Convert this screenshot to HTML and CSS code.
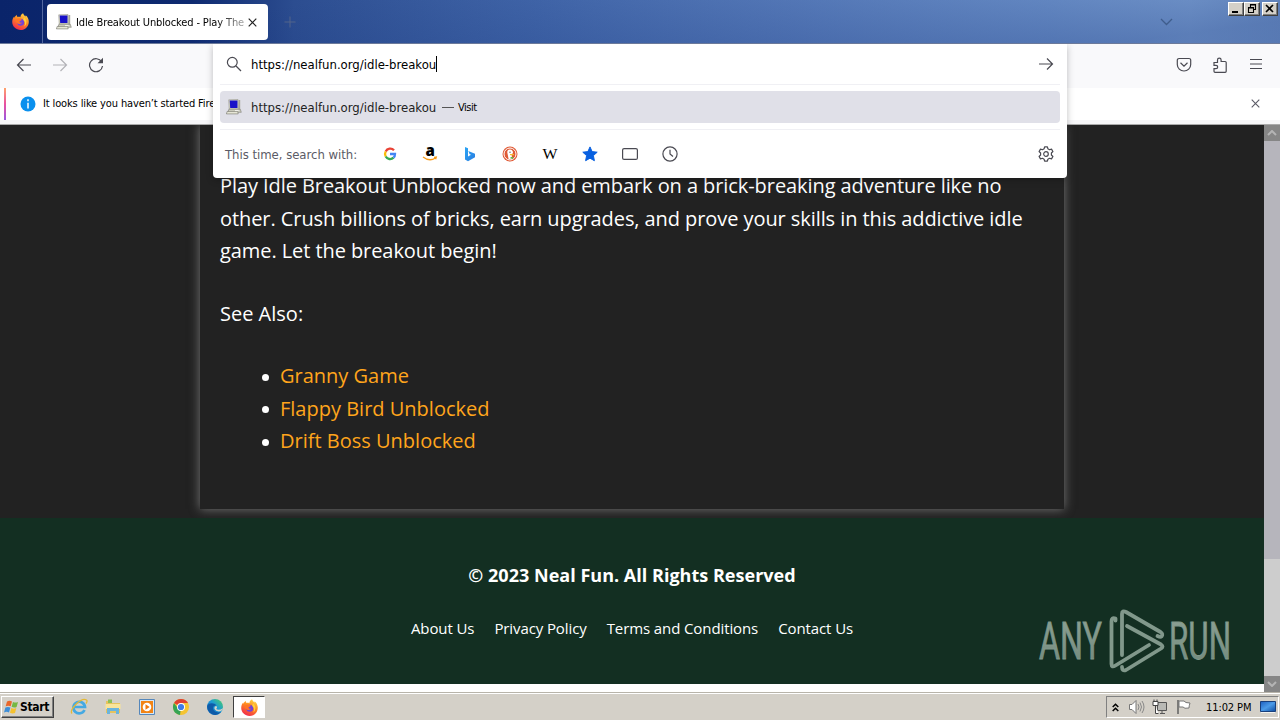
FILE: index.html
```html
<!DOCTYPE html>
<html lang="en">
<head>
<meta charset="utf-8">
<title>Idle Breakout Unblocked</title>
<link rel="stylesheet" href="styles.css">
</head>
<body>
<svg class="defs" width="0" height="0">
  <defs>
    <linearGradient id="fox" x1="0.8" y1="0" x2="0.3" y2="1"><stop offset="0" stop-color="#ffe14a"/><stop offset=".45" stop-color="#ff8a20"/><stop offset="1" stop-color="#f0264f"/></linearGradient>
    <linearGradient id="bing" x1="0" y1="0" x2="1" y2="1"><stop offset="0" stop-color="#2aa5f5"/><stop offset="1" stop-color="#2a7de0"/></linearGradient>
    <linearGradient id="edge" x1="0" y1="1" x2="1" y2="0"><stop offset="0" stop-color="#0b5db5"/><stop offset=".55" stop-color="#1c9ad6"/><stop offset="1" stop-color="#4fd35c"/></linearGradient>
    <linearGradient id="desk" x1="0" y1="0" x2="1" y2="1"><stop offset="0" stop-color="#1c5fc0"/><stop offset=".5" stop-color="#4b9be8"/><stop offset="1" stop-color="#0c4aa0"/></linearGradient>
    <linearGradient id="mark" x1="0" y1="0" x2="0" y2="1"><stop offset="0" stop-color="#8fa397"/><stop offset="1" stop-color="#6f877a"/></linearGradient>
    <symbol id="firefox" viewBox="0 0 16 16">
      <path fill="url(#fox)" d="M10.4.2c.3 1.1 1.3 2 2.3 3 .2-.5.2-.8.1-1.2 2 1.400 3.100 4 3 6.400C15.700 12.700 12.300 16 8.100 16 3.700 16 .2 12.600.2 8.500c0-2.200.8-4 1.900-5.100v1.300C2.800 3.200 4 2.100 4.500 1.700c-.1.900.2 1.500.9 2 1.100-.2 1.900 0 2.500.3C7.900 2.300 9 .9 10.400.2z"/>
      <circle cx="8.200" cy="8.600" r="3.300" fill="#7443d8"/>
      <path fill="#ff7426" d="M3 7.500c1-1.800 2.300-2.600 4.500-2.300 1.200.2 1.700.8 1.500 1.300-.3.700-1.700.6-1.900 1.500-.1.900 1.200 1.600 2.700 1-1 1.600-3.600 2-5.400.2z"/>
      <path fill="#ffd33d" d="M11.300 4.300c1.800 1.300 2.500 3 2.200 5.100-.3 1.600-1.200 2.800-2 3.300 1.200-2.300 1.200-4.500-.9-6.200z"/>
    </symbol>
    <symbol id="computer" viewBox="0 0 16 16">
      <path fill="#d8d8c4" stroke="#8c8c80" stroke-width=".5" d="M2.700.8 12 .5l.5 9.300-9.300.2z"/>
      <path fill="#1710c8" d="M3.700 1.500h7.800v7.600H4.200z"/>
      <path fill="#a5a598" d="M12.500 1h1.700v10h-1.700z"/>
      <path fill="#cfcfc0" stroke="#6a6a60" stroke-width=".5" d="M2.800 10.300h11.500l1 3H2z"/>
      <path fill="#e6e6d6" stroke="#5d5d54" stroke-width=".5" d="M1.200 12.400h10.500l.5 2.500H.4z"/>
      <path stroke="#fff" stroke-width=".8" d="M9 11.600h3.600"/>
    </symbol>
  </defs>
</svg>
<div class="screen">
  <header class="tabs">
    <div class="home-tab"><svg width="17" height="17"><use href="#firefox"/></svg></div>
    <div class="tab">
      <svg width="16" height="16"><use href="#computer"/></svg>
      <span class="tab-title">Idle Breakout Unblocked - Play The</span>
      <svg class="tab-close" width="9" height="9" viewBox="0 0 9 9"><path d="M.7.7l7.600 7.600M8.300.7.700 8.300" stroke="#222" stroke-width="1.200"/></svg>
    </div>
    <svg class="new-tab" width="12" height="12" viewBox="0 0 12 12"><path d="M6 .5v11M.5 6h11" stroke="#53658a"/></svg>
    <svg class="tab-list" width="13" height="8" viewBox="0 0 13 8"><path d="M1 1l5.500 5.500L12 1" fill="none" stroke="#3f5d8c" stroke-width="1.300"/></svg>
    <div class="win-buttons">
      <span class="wb"><svg width="13" height="10" viewBox="0 0 13 10"><path d="M3 9h6" stroke="#000" stroke-width="2"/></svg></span>
      <span class="wb"><svg width="13" height="11" viewBox="0 0 13 11"><path d="M5.500 4V1.500h5v5H8.500M5 2h6M3.500 4.500h5v5h-5zM3 5h6" fill="none" stroke="#000" stroke-width="1.100"/></svg></span>
      <span class="wb close"><svg width="13" height="11" viewBox="0 0 13 11"><path d="M3 2l7 7M10 2l-7 7" stroke="#000" stroke-width="1.600"/></svg></span>
    </div>
  </header>
  <nav class="toolbar">
    <svg width="16" height="16" viewBox="0 0 16 16"><path d="M15 8H1.500M7.500 2l-6 6 6 6" class="line"/></svg>
    <svg class="dim" width="16" height="16" viewBox="0 0 16 16"><path d="M1 8h13.500M8.500 2l6 6-6 6" class="line"/></svg>
    <svg width="16" height="16" viewBox="0 0 16 16"><path d="M13.700 5A6.500 6.500 0 1 0 14.500 9" class="line"/><path fill="#4a4a52" d="M15 .8v5.500H9.500z"/></svg>
    <div class="tools">
      <svg width="16" height="16" viewBox="0 0 16 16"><path d="M3 1.500h10a1.700 1.700 0 0 1 1.700 1.700V7.500a6.700 6.500 0 0 1-13.400 0V3.200A1.700 1.700 0 0 1 3 1.500zM4.500 5.800 8 9.100l3.500-3.300" class="line"/></svg>
      <svg width="16" height="16" viewBox="0 0 16 16"><path d="M2 5.500h3.500V3a1.800 1.800 0 0 1 3.600 0v1.500h4.100a1 1 0 0 1 1 1v8.800a1 1 0 0 1-1 1H3a1 1 0 0 1-1-1v-2.600h2a1.600 1.600 0 0 0 0-3.400H2z" class="line"/></svg>
      <svg width="16" height="16" viewBox="0 0 16 16"><path d="M2 2.500h12M2 7h12M2 11.500h12" class="line"/></svg>
    </div>
  </nav>
  <div class="notice">
    <i class="stripe"></i>
    <svg width="16" height="16" viewBox="0 0 16 16"><circle cx="8" cy="8" r="7.500" fill="#0a90ee"/><path d="M8 3.300v1.900M8 6.700v5.700" stroke="#fff" stroke-width="1.500"/></svg>
    <span class="notice-text">It looks like you haven’t started Fire</span>
    <svg class="notice-close" width="9" height="9" viewBox="0 0 9 9"><path d="M.7.7l7.600 7.600M8.300.7.700 8.300" stroke="#5b5b66" stroke-width="1.100"/></svg>
  </div>
  <div class="viewport">
    <div class="page">
      <div class="stage">
        <article class="card">
          <p class="intro">Play Idle Breakout Unblocked now and embark on a brick-breaking adventure like no<br>other. Crush billions of bricks, earn upgrades, and prove your skills in this addictive idle<br>game. Let the breakout begin!</p>
          <p class="see">See Also:</p>
          <ul class="links">
            <li><a>Granny Game</a></li>
            <li><a>Flappy Bird Unblocked</a></li>
            <li><a>Drift Boss Unblocked</a></li>
          </ul>
        </article>
      </div>
      <footer class="footer">
        <p class="copyright">© 2023 Neal Fun. All Rights Reserved</p>
        <div class="footer-links"><a>About Us</a><a>Privacy Policy</a><a>Terms and Conditions</a><a>Contact Us</a></div>
        <svg class="watermark" width="200" height="74" viewBox="0 0 200 74">
          <g fill="url(#mark)" stroke="#81988b" stroke-width=".8" font-family="Roboto, sans-serif" font-size="51">
            <text x="4" y="54" textLength="63" lengthAdjust="spacingAndGlyphs">ANY</text>
            <text x="134" y="54" textLength="62" lengthAdjust="spacingAndGlyphs">RUN</text>
          </g>
          <g fill="none" stroke="#81988b" stroke-width="3.800" stroke-linejoin="round" stroke-linecap="round">
            <path d="M80.500 15.500v-2q-4-1.500-4 3V59q0 4 4 1.500L114 40"/>
            <path d="M87 50V9q0-4 4-2L125.500 27q3 2 1 4.500-1 1-4-.5"/>
            <path d="M92 21l34 18.500q3 2 0 4L91 65q-4 1.500-4-3"/>
          </g>
        </svg>
      </footer>
    </div>
    <div class="scrollbar">
      <span class="sb-btn"><svg width="10" height="6" viewBox="0 0 10 6"><path d="M1 5l4-4 4 4" fill="none" stroke="#b4b4b4" stroke-width="2"/></svg></span>
      <span class="thumb"></span>
      <span class="track"></span>
      <span class="sb-btn"><svg width="10" height="6" viewBox="0 0 10 6"><path d="M1 1l4 4 4-4" fill="none" stroke="#b4b4b4" stroke-width="2"/></svg></span>
    </div>
  </div>
  <div class="taskbar">
    <div class="start"><svg width="15" height="15" viewBox="0 0 15 15"><path fill="#e9672b" d="M3 1.500q2.500-1.300 5 0L6.700 6.300q-2.500-1.100-5 0z"/><path fill="#75b843" d="M9 2q2.500 1.200 5 0l-1.400 5q-2.500 1.100-5-.2z"/><path fill="#3d8ed8" d="M1.400 7.500q2.500-1.200 5 0L5 12.400q-2.500-1.100-5 0z"/><path fill="#f5c12e" d="M7.300 8q2.500 1.200 5 .1L11 13q-2.500 1-5-.2z"/></svg><b>Start</b></div>
    <div class="launch">
      <svg width="18" height="18" viewBox="0 0 18 18"><path d="M14.500 12A5.800 5.800 0 1 1 15 9H5" fill="none" stroke="#45a9e2" stroke-width="2.700"/><path d="M2 15.500C-1 12 11-1 16.500 2q1.300 1-.5 3.500" fill="none" stroke="#e4b936" stroke-width="1.300"/></svg>
      <svg width="18" height="18" viewBox="0 0 18 18"><path fill="#e7c35d" d="M2 3h5l1 2h8v10H2z"/><path fill="#8cbf55" d="M4 1.500h4V5H4z"/><path fill="#f9e49a" d="M1.500 6h15v5h-15z"/><path fill="#6bb4dc" d="M3 10h12v6h-3v-3H6v3H3z"/></svg>
      <svg width="18" height="18" viewBox="0 0 18 18"><path fill="#d7e8f6" stroke="#5587bb" d="M1.500 1.500h15v15h-15z"/><path fill="#f28415" d="M3 3h12v12H3z"/><circle cx="9" cy="9" r="4.300" fill="#fff"/><path fill="#ef790e" d="M7.500 6.300 11.700 9l-4.200 2.700z"/></svg>
      <svg width="18" height="18" viewBox="0 0 18 18"><circle cx="9" cy="9" r="8" fill="#f5c431"/><path fill="#df4133" d="M9 9 2 5.100A8 8 0 0 1 16 5H9z"/><path fill="#36a455" d="M9 9 8 17A8 8 0 0 1 2 5.100l4.500 6z"/><circle cx="9" cy="9" r="4" fill="#fff"/><circle cx="9" cy="9" r="3.100" fill="#3e7be8"/></svg>
      <svg width="18" height="18" viewBox="0 0 18 18"><circle cx="9" cy="9" r="8" fill="url(#edge)"/><path fill="#0f5ba8" d="M1.200 8C2 5 8 4 10.500 7.500 8 7 6 9 7.500 12q2 3.500 7.500 2-4 4.500-9 2Q1 13 1.200 8z"/><path fill="#d6d3ca" d="M10.500 8q1.200 2-.3 3 2.500 2 6.800-.8-.2 2.700-2.700 3.100-4.500.7-5.800-2.300Q8 8 10.500 8z"/></svg>
      <span class="active-app"><svg width="17" height="17"><use href="#firefox"/></svg></span>
    </div>
    <div class="tray">
      <svg width="7" height="9" viewBox="0 0 7 9"><path d="M.7 4l2.800-2.800L6.300 4M.7 8l2.800-2.800L6.300 8" fill="none" stroke="#000" stroke-width="1.500"/></svg>
      <svg class="t-vol" width="17" height="16" viewBox="0 0 17 16"><path d="M1.500 5.500H4l4-4v13l-4-4H1.500z" fill="#fff" stroke="#777"/><path d="M10 5q2 3 0 6M12 3.500q3 4.500 0 9M14 2q4 6 0 12" fill="none" stroke="#888"/></svg>
      <svg class="t-net" width="16" height="16" viewBox="0 0 16 16"><path d="M5.500 3.500h9v8h-9zM8 14.500h5M10 12v2" fill="#b9b9b5" stroke="#555"/><path d="M1 2.500h5v4H1zM2 .5v2M5 .5v2M3.500 6.500v8h3" fill="#fff" stroke="#444"/></svg>
      <svg class="t-flag" width="16" height="16" viewBox="0 0 16 16"><path d="M2 1v14" stroke="#666" stroke-width="1.600"/><path d="M3 2h5q1 2 6 2-1 3-1 5Q8 10 7 8H3z" fill="#fff" stroke="#777"/></svg>
      <span class="clock">11:02 PM</span>
      <svg width="16" height="14" viewBox="0 0 16 14"><path fill="url(#desk)" stroke="#183f7c" d="M.5 1.500h15v10H.5z"/><path d="M1 12.500h14" stroke="#f3f3ef"/></svg>
    </div>
  </div>
  <section class="urlbar">
    <div class="input-row">
      <svg width="16" height="16" viewBox="0 0 16 16"><circle cx="6.300" cy="6.300" r="4.900" class="line"/><path d="M10 10l5 5" class="line"/></svg>
      <span class="url">https://nealfun.org/idle-breakou</span><i class="caret"></i>
      <svg class="end" width="16" height="16" viewBox="0 0 16 16"><path d="M1 8h13.500M9 2.500 14.500 8 9 13.500" class="line"/></svg>
    </div>
    <div class="result">
      <svg width="16" height="16"><use href="#computer"/></svg>
      <span class="url">https://nealfun.org/idle-breakou</span><span class="dash"></span><span class="visit">Visit</span>
    </div>
    <div class="engines">
      <span class="with">This time, search with:</span>
      <div class="engine-list">
        <svg width="16" height="16" viewBox="0 0 16 16" fill="none" stroke-width="2.300"><path d="M12 4.300A5 5 0 0 0 3.700 5.500" stroke="#e94235"/><path d="M3.700 5.500a5 5 0 0 0 0 5" stroke="#fabb05"/><path d="M3.700 10.500A5 5 0 0 0 11.500 11.700" stroke="#34a853"/><path d="M8 8h5q0 2.500-1.500 3.700" stroke="#4285f4"/></svg>
        <svg class="spill" width="16" height="16" viewBox="0 0 16 16"><text x="3.500" y="10" font-family="Open Sans, sans-serif" font-weight="800" font-size="15" font-stretch="normal">a</text><path d="M1 11q6.500 5 12.500 1M12 11.300l2.300-.2-.7 2.200" fill="none" stroke="#f79b18" stroke-width="1.300"/></svg>
        <svg width="16" height="16" viewBox="0 0 16 16"><path fill="url(#bing)" d="M3 1l3 1.200v8.300l3-1.700-1.500-.7-1.200-3L13 7.700v3.500L6 15.200l-3-1.700z"/></svg>
        <svg width="16" height="16" viewBox="0 0 16 16"><circle cx="8" cy="8" r="7.500" fill="#e05a36"/><circle cx="8" cy="8" r="6" fill="#e05a36" stroke="#fff"/><path fill="#fff" d="M6.600 13 5.300 6.500Q5 3.500 8 3.400q3 .1 3 3.600l-1.400 1.500.6 4.800z"/><circle cx="8" cy="6.200" r=".6" fill="#333"/><path fill="#f7bb2e" d="M8 8h4v1.200H8z"/><path fill="#62b84b" d="M8.500 11h2.700v1.700H8.500z"/></svg>
        <svg class="spill" width="16" height="16" viewBox="0 0 16 16"><text x="0.500" y="13" font-family="Liberation Serif, serif" font-size="15" textLength="15" lengthAdjust="spacingAndGlyphs">W</text></svg>
        <svg width="16" height="16" viewBox="0 0 16 16"><path fill="#0860e0" stroke="#0860e0" stroke-linejoin="round" d="M8 .9l2.100 4.700 5.100.6-3.800 3.400 1 5.100L8 12.200l-4.400 2.500 1-5.100L.8 6.200l5.100-.6z"/></svg>
        <svg width="16" height="16" viewBox="0 0 16 16"><rect x=".6" y="2.600" width="14.800" height="10.800" rx="1.500" class="line"/></svg>
        <svg width="16" height="16" viewBox="0 0 16 16"><circle cx="8" cy="8" r="7.100" class="line"/><path d="M8 3.800V8l3 2.500" class="line"/></svg>
      </div>
      <svg class="end" width="16" height="16" viewBox="0 0 16 16"><circle cx="8" cy="8" r="2.300" class="line"/><path class="line" d="M6.600.8h2.800l.5 2 1.600.9 2-.6 1.400 2.400-1.500 1.500v2l1.500 1.500-1.400 2.400-2-.6-1.600.9-.5 2H6.600l-.5-2-1.600-.9-2 .6-1.400-2.400L2.600 9V7L1.100 5.500l1.400-2.400 2 .6 1.600-.9z" stroke-linejoin="round"/></svg>
    </div>
  </section>
</div>
</body>
</html>
```
FILE: styles.css
```css
* { box-sizing: border-box; }
body { margin: 0; overflow: hidden; font-family: "DejaVu Sans Condensed", "DejaVu Sans", sans-serif; font-stretch: condensed; }
svg { flex: none; display: block; }
p, ul { margin: 0; }
.defs { position: absolute; }
.line { fill: none; stroke: #4a4a52; stroke-width: 1.2; }
.spill { overflow: visible; }
.screen { position: relative; width: 1280px; height: 720px; display: flex; flex-direction: column; overflow: hidden; }

.tabs {
  height: 44px; flex: none; display: flex; align-items: center; border-bottom: 1px solid #6c7a9a;
  background: linear-gradient(172deg, rgba(255,255,255,0) 20%, rgba(22,52,125,.48) 90%), linear-gradient(90deg, #0a246a 0%, #0e2a70 15%, #2c4d90 23%, #4368ab 42%, #6287c4 62%, #84abdf 82%, #9cc2ee 93%, #94b9e5 100%);
}
.home-tab { width: 43px; height: 43px; border-right: 1px solid #5368a0; display: flex; align-items: center; padding-left: 12px; }
.tab { width: 221px; height: 36px; margin: 1px 0 0 4px; border-radius: 4px; background: #fff; display: flex; align-items: center; padding-left: 9px; }
.tab-title { width: 170px; margin-left: 4px; font-size: 11px; letter-spacing: -.13px; white-space: nowrap; -webkit-mask-image: linear-gradient(90deg, #000 82%, rgba(0,0,0,.3)); mask-image: linear-gradient(90deg, #000 82%, rgba(0,0,0,.3)); }
.tab-close { margin-left: 2px; }
.new-tab { margin-left: 16px; }
.tab-list { margin-left: auto; }
.win-buttons { display: flex; align-self: flex-start; padding-top: 2px; margin: 0 2px 0 55px; }
.wb { width: 16px; height: 14px; background: #d4d0c8; border: 1px solid; border-color: #fff #404040 #404040 #fff; box-shadow: inset -1px -1px #808080; display: flex; }
.wb.close { margin-left: 2px; }

.toolbar { height: 44px; flex: none; background: #f9f9fb; display: flex; align-items: center; gap: 20px; padding: 0 16px; padding-bottom: 2px; }
.dim { opacity: .4; }
.tools { display: flex; gap: 20px; margin-left: auto; }
.notice { height: 37px; flex: none; display: flex; align-items: center; padding: 0 20px 5px 4px; background: #fff; border-bottom: 1px solid #aaa; box-shadow: inset 0 -4px #f6f6f8; }
.stripe { width: 2px; height: 32px; background: linear-gradient(#ffa26b, #e950a0 50%, #9a58e0); }
.notice > .stripe + svg { margin-left: 14px; }
.notice-text { margin-left: 7px; font-size: 11px; letter-spacing: -.13px; white-space: nowrap; }
.notice-close { margin-left: auto; }

.viewport { height: 567px; flex: none; display: flex; background: #fff; }
.page { width: 1264px; height: 559px; background: #222; overflow: hidden; font-family: "Open Sans", sans-serif; font-stretch: normal; color: #fff; }
.stage { height: 393px; padding: 0 200px; overflow: hidden; }
.card { width: 864px; height: 384px; padding: 45px 20px 0; background: #222; box-shadow: 0 0 10px #777; font-size: 20px; line-height: 32.5px; white-space: nowrap; }
.intro { letter-spacing: -.075px; }
.see { margin-top: 30px; }
.links { margin-top: 30px; padding-left: 60px; list-style: none; }
.links li { display: flex; align-items: center; }
.links li::before { content: ""; width: 7px; height: 7px; margin: 2px 11px 0 -18px; border-radius: 50%; background: #fff; }
.links a { color: #ffa51c; }
.footer { position: relative; height: 166px; background: #132f22; display: flex; flex-direction: column; align-items: center; padding-top: 44px; }
.copyright { font-size: 18px; line-height: 26px; font-weight: 700; letter-spacing: .02px; }
.footer-links { display: flex; gap: 20px; margin-top: 29px; font-size: 15px; line-height: 22px; letter-spacing: -.1px; white-space: nowrap; }
.watermark { position: absolute; left: 1035px; top: 87px; overflow: visible; }

.scrollbar { width: 16px; display: flex; flex-direction: column; background: #cdcdcd; }
.sb-btn { height: 16px; background: #868686; display: flex; align-items: center; justify-content: center; }
.thumb { height: 418px; background: #b6b5bc; }
.track { flex: 1; }

.taskbar { height: 28px; flex: none; background: #d4d0c8; border-top: 1px solid #b8b4aa; box-shadow: inset 0 1px #fff; display: flex; align-items: center; padding: 1px 1px 0; }
.start { width: 53px; height: 22px; border: 1px solid; border-color: #fff #404040 #404040 #fff; box-shadow: inset -1px -1px #808080; display: flex; align-items: center; padding-left: 2px; gap: 1px; font-size: 12px; }
.start b { letter-spacing: -.35px; }
.launch { display: flex; align-items: center; gap: 16px; margin-left: 16px; }
.active-app { width: 32px; height: 22px; margin-left: -7px; background: #fff; border: 1px solid; border-color: #404040 #fff #fff #404040; display: flex; align-items: center; justify-content: center; }
.tray { width: 173px; height: 22px; margin-left: auto; border: 1px solid; border-color: #808080 #fff #fff #808080; display: flex; align-items: center; padding-left: 5px; }
.t-vol { margin-left: 9px; }
.t-net { margin-left: 7px; }
.t-flag { margin-left: 8px; }
.clock { width: 46px; margin: 0 8px 0 14px; font-size: 11px; letter-spacing: -.1px; white-space: nowrap; }

.urlbar { position: absolute; left: 213px; top: 44px; width: 854px; height: 134px; background: #fff; border-radius: 0 0 4px 4px; box-shadow: 0 2px 7px rgba(0,0,0,.25); clip-path: inset(0 -12px -12px -12px); padding: 0 7px; }
.input-row { height: 41px; display: flex; align-items: center; padding-left: 6px; border-bottom: 1px solid #f0f0f4; }
.url { width: 185px; margin-left: 9px; font-size: 13px; white-space: nowrap; }
.caret { width: 1px; height: 16px; background: #000; }
.end { margin-left: auto; margin-right: 6px; }
.result { height: 32px; margin-top: 6px; background: #e0e0e8; border-radius: 4px; display: flex; align-items: center; padding-left: 6px; }
.result .url { color: #222; }
.dash { width: 12px; height: 1px; background: #555; margin-left: 6px; }
.visit { margin-left: 4px; font-size: 11px; letter-spacing: -.5px; }
.engines { height: 49px; margin-top: 6px; border-top: 1px solid #f0f0f4; display: flex; align-items: center; padding-left: 5px; }
.with { width: 132px; font-size: 13px; letter-spacing: -.03px; color: #5b5b66; white-space: nowrap; }
.engine-list { display: flex; gap: 24px; margin-left: 25px; }
```
